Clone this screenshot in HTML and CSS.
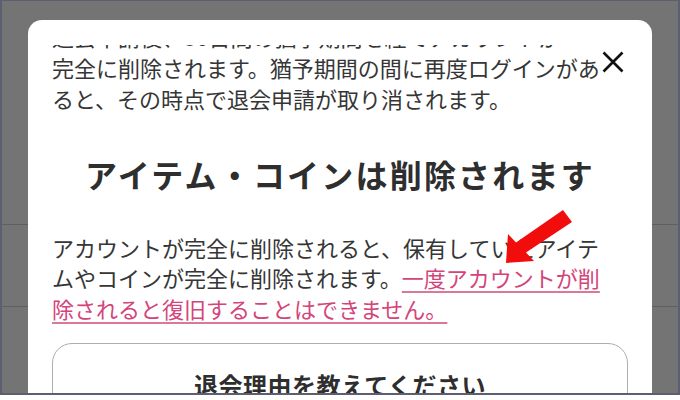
FILE: index.html
```html
<!DOCTYPE html>
<html lang="ja">
<head>
<meta charset="utf-8">
<title>退会</title>
<link rel="stylesheet" href="styles.css">
</head>
<body>
<div class="frame">
  <div class="page">
    <div class="page-row page-row--top"></div>
    <div class="page-row page-row--mid"></div>
    <div class="page-row page-row--rest"></div>
  </div>
  <div class="modal">
    <button class="close" aria-label="閉じる">
      <svg class="close-icon" viewBox="0 0 24 24" width="24" height="24">
        <path d="M2.5 2.5 L21.5 21.5 M21.5 2.5 L2.5 21.5" stroke="#111" stroke-width="2.6" stroke-linecap="butt" fill="none"/>
      </svg>
    </button>
    <div class="scroll">
      <div class="prev-line"><span class="text prev-text">退会申請後、30日間の猶予期間を経てアカウントが</span></div>
      <p class="text text--first">完全に削除されます。猶予期間の間に再度ログインがあると、その時点で退会申請が取り消されます。</p>
      <h2 class="heading">アイテム・コインは削除されます</h2>
      <p class="text">アカウントが完全に削除されると、保有していたアイテムやコインが完全に削除されます。<span class="warn">一度アカウントが削除されると復旧することはできません。</span></p>
      <div class="card">
        <h3 class="card-title">退会理由を教えてください</h3>
      </div>
    </div>
  </div>
  <svg class="arrow" viewBox="0 0 680 400" width="680" height="400">
    <polygon points="506,263 508,234 516,242.5 563,210 572,222 526,252.5 534,261" fill="#f20d0d"/>
  </svg>
</div>
</body>
</html>
```

FILE: styles.css
```css
html, body {
  margin: 0;
  padding: 0;
  background: #ffffff;
}

body {
  font-family: "Noto Sans CJK JP", "Noto Sans", sans-serif;
}

.frame {
  position: relative;
  width: 680px;
  height: 395px;
  box-sizing: border-box;
  border: 2px solid #5c5f70;
  border-top-width: 1px;
  background: #747474;
  overflow: hidden;
}

.page {
  display: flex;
  flex-direction: column;
}

.page-row {
  border-bottom: 1px solid #5f5f5f;
}

.page-row--top {
  height: 223px;
}

.page-row--mid {
  height: 81px;
}

.page-row--rest {
  height: 120px;
  border-bottom: 0;
}

.modal {
  position: absolute;
  left: 26px;
  top: 19px;
  width: 624px;
  height: 420px;
  background: #ffffff;
  border-radius: 14px 14px 0 0;
}

.close {
  position: absolute;
  right: 27px;
  top: 30px;
  width: 24px;
  height: 24px;
  padding: 0;
  border: 0;
  background: none;
  z-index: 2;
}

.close-icon {
  display: block;
}

.scroll {
  margin-top: 25px;
  height: 395px;
  overflow: hidden;
  padding: 0 24px;
}

.prev-line {
  height: 7px;
  overflow: hidden;
  display: flex;
  align-items: flex-end;
}

.prev-text {
  display: block;
  flex: none;
  white-space: nowrap;
  color: #666;
}

.text {
  margin: 35px 0 0;
  padding-right: 16px;
  font-size: 22px;
  line-height: 30.8px;
  color: #363636;
}

.text--first {
  margin-top: 0;
}

.heading {
  margin: 38px 0 0;
  font-size: 32px;
  line-height: 45px;
  letter-spacing: 2.2px;
  font-weight: 700;
  text-align: center;
  color: #2e2e2e;
}

.warn {
  color: #d4447a;
  text-decoration: underline;
  text-decoration-color: #d9789a;
  text-decoration-thickness: 2px;
  text-underline-offset: 4px;
}

.card {
  margin-top: 19px;
  border: 1.5px solid #adadad;
  border-radius: 20px;
  padding: 24px 16px;
}

.card-title {
  margin: 0;
  font-size: 24px;
  line-height: 34px;
  letter-spacing: 0.5px;
  font-weight: 700;
  text-align: center;
  color: #2e2e2e;
}

.arrow {
  position: absolute;
  left: -2px;
  top: -1px;
  pointer-events: none;
}
```
